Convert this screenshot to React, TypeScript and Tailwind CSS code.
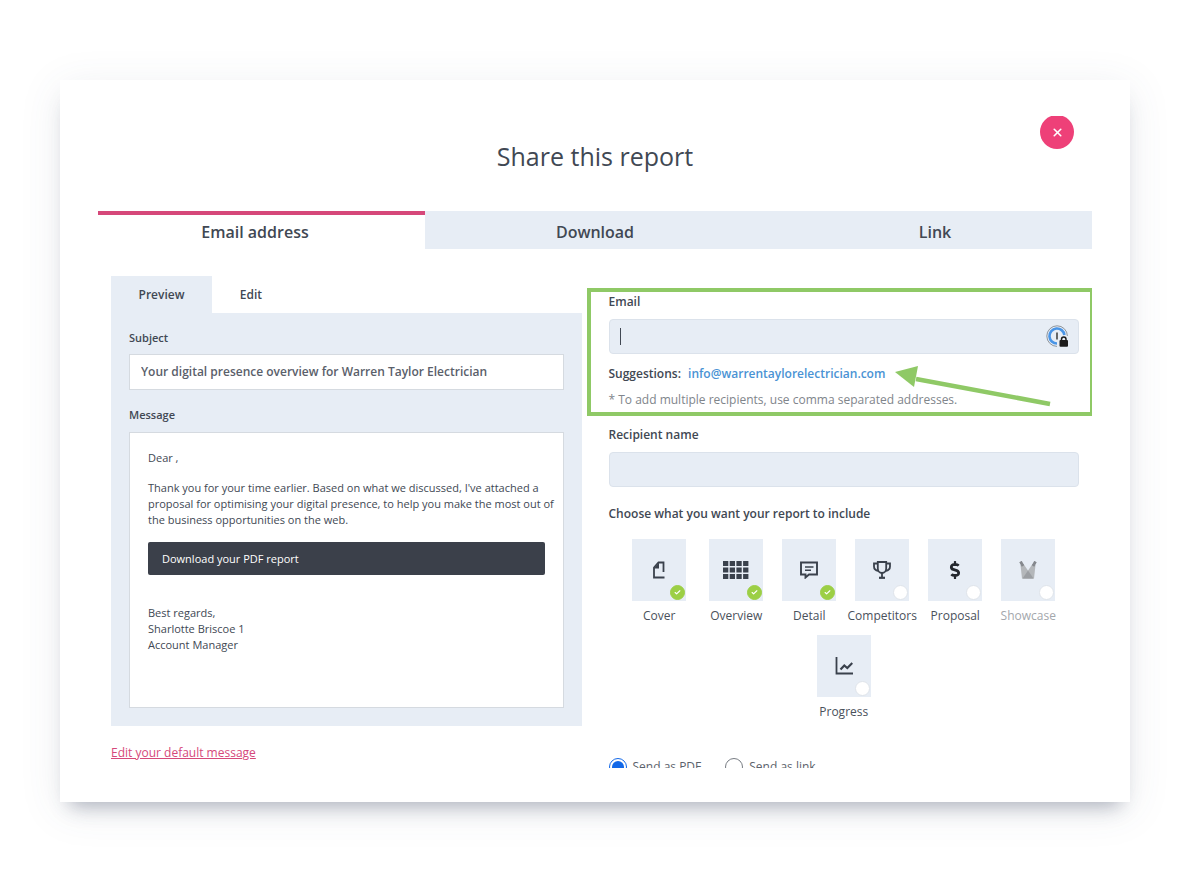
import { useState } from 'react'
import type { ReactNode } from 'react'
import { Check, X } from 'lucide-react'
import { FaDollarSign } from 'react-icons/fa'

function CoverIcon() {
  return (
    <svg width="18" height="18" viewBox="0 0 18 18" fill="none" stroke="#3a414c" strokeWidth="1.800">
      <path d="M14.500 16.500H4V6.500L8.500 1.500h5v9.500" />
      <path d="M4 7.500h5V1.500z" fill="#3a414c" stroke="none" />
    </svg>
  )
}

function OverviewIcon() {
  return (
    <svg width="26" height="18" viewBox="0 0 26 18" fill="#3a414c">
      {[0, 6.500, 13].map((y) => [0, 6.700, 13.400, 20.100].map((x) => (
        <rect key={`${x}-${y}`} x={x} y={y} width="5.300" height="5" />
      )))}
    </svg>
  )
}

function DetailIcon() {
  return (
    <svg width="18" height="18" viewBox="0 0 18 18" fill="none" stroke="#3a414c" strokeWidth="1.900">
      <path d="M1 1.500h16v12H9L5.500 16.500v-3H1z" />
      <path d="M5 6h8.500M5 9.200h6" strokeWidth="1.600" />
    </svg>
  )
}

function TrophyIcon() {
  return (
    <svg width="18" height="18" viewBox="0 0 18 18" fill="none" stroke="#3a414c" strokeWidth="1.800">
      <path d="M4.800 1h8.400v6.500c0 2.500-1.800 4.500-4.200 4.500s-4.200-2-4.200-4.500z" />
      <path d="M4.800 2.500H1V5.500c0 2.400 1.800 4 4.300 4.300M13.200 2.500H17V5.500c0 2.400-1.800 4-4.300 4.300" />
      <path d="M9 12v4.500" />
      <path d="M6 16.800h6" strokeWidth="2.200" />
    </svg>
  )
}

function ShowcaseIcon() {
  return (
    <svg width="18" height="18" viewBox="0 0 18 18">
      <path d="M1.500 4L4.500 3 14.500 17.500H3z" fill="#b4b7ba" />
      <path d="M16.500 4L13.500 3 3.500 17.500H15z" fill="#b4b7ba" />
      <path d="M9 9.500l5.500 8h-11z" fill="#9b9ea2" />
      <path d="M1.500 .5l2.500 4.500M16.500 .5L14 5" stroke="#85888d" strokeWidth="2.800" />
    </svg>
  )
}

function ProgressIcon() {
  return (
    <svg width="18" height="18" viewBox="0 0 18 18" fill="none" stroke="#3a414c" strokeWidth="1.800">
      <path d="M1.500 0v16.500H18" />
      <path d="M5.500 12.500l3.800-4 3 2.500 5-5" strokeWidth="2.200" />
    </svg>
  )
}

function PasswordIcon() {
  return (
    <svg className="absolute right-2.5 top-1.5" width="23" height="23" viewBox="0 0 23 23" fill="none">
      <path d="M11 21.400A10.300 10.300 0 1 1 21.400 11" stroke="#8d949c" strokeWidth="1" />
      <path d="M11 18.500A7.500 7.500 0 1 1 18.400 10" stroke="#4a95e6" strokeWidth="2.600" />
      <path d="M11 7.500v7" stroke="#444" strokeWidth="1.600" />
      <rect x="13.500" y="15" width="8.500" height="6.800" rx="1" fill="#1c1c1c" />
      <path d="M15.500 15.500v-1.300a2.250 2.250 0 0 1 4.500 0v1.300" stroke="#1c1c1c" strokeWidth="1.500" />
    </svg>
  )
}

const sections: { id: string; icon: ReactNode; on?: boolean; disabled?: boolean }[] = [
  { id: 'Cover', icon: <CoverIcon />, on: true },
  { id: 'Overview', icon: <OverviewIcon />, on: true },
  { id: 'Detail', icon: <DetailIcon />, on: true },
  { id: 'Competitors', icon: <TrophyIcon /> },
  { id: 'Proposal', icon: <FaDollarSign size={18} className="text-[#24282e]" /> },
  { id: 'Showcase', icon: <ShowcaseIcon />, disabled: true },
  { id: 'Progress', icon: <ProgressIcon /> },
]

function SectionTile({ id, icon, on, disabled }: { id: string; icon: ReactNode; on?: boolean; disabled?: boolean }) {
  return (
    <label className={`flex w-[65px] flex-col items-center first:mr-1 ${disabled ? 'text-[#a3a7ac]' : 'text-[#4a515b]'}`}>
      <span className="relative flex h-[62px] w-[54px] items-center justify-center bg-[#e7edf5] text-[#3a414c]">
        {icon}
        <input
          type="checkbox"
          defaultChecked={on}
          disabled={disabled}
          className="peer absolute bottom-px right-px size-[15px] appearance-none rounded-full border border-[#dfe4ea] bg-white checked:border-[#9ccf45] checked:bg-[#9ccf45]"
        />
        <Check size={7} strokeWidth={4} className="pointer-events-none absolute bottom-[5px] right-[5px] hidden text-white peer-checked:block" />
      </span>
      <span className="mt-1.5 text-[12px] leading-[18px]">{id}</span>
    </label>
  )
}

export default function App() {
  const [subject, setSubject] = useState('Your digital presence overview for Warren Taylor Electrician')

  return (
    <main className="min-h-screen bg-white pt-20 pr-[62px] pb-[78px] pl-[60px] font-['Open_Sans',sans-serif] text-[#414853]">
      <div className="bg-white px-[38px] pt-9 pb-[34px] shadow-[0_14px_18px_-10px_rgba(70,80,105,0.4),0_8px_40px_rgba(70,80,105,0.1)]">
        <div className="max-h-[calc(100vh-228px)] overflow-hidden">
          <header className="relative pt-5">
            <h1 className="text-center text-[25px] leading-10">Share this report</h1>
            <button aria-label="Close" className="absolute -top-px right-[18px] flex size-[34px] items-center justify-center rounded-full bg-[#ee4078] text-white">
              <X size={13} strokeWidth={3} />
            </button>
          </header>

          <nav className="-mx-[13px] mt-[35px] grid grid-cols-3 text-[16px] font-semibold">
            <button className="h-[38px] border-t-4 border-[#d6487a]">Email address</button>
            <button className="h-[38px] bg-[#e7edf5] pt-1">Download</button>
            <button className="h-[38px] bg-[#e7edf5] pt-1">Link</button>
          </nav>

          <div className="grid grid-cols-2 gap-[27px] px-[13px] pt-[27px]">
            <section>
              <div className="flex text-[12px] font-semibold">
                <button className="h-[37px] w-[101px] bg-[#e7edf5]">Preview</button>
                <button className="h-[37px] w-[78px]">Edit</button>
              </div>
              <div className="bg-[#e7edf5] px-[18px] pt-4 pb-[18px]">
                <label htmlFor="subject" className="block text-[11px] font-semibold leading-[18px]">Subject</label>
                <input
                  id="subject"
                  value={subject}
                  onChange={(e) => setSubject(e.target.value)}
                  className="mt-[7px] block h-9 w-full border border-[#d5dae0] bg-white px-[11px] pb-0.5 text-[12px] font-semibold text-[#5a606a] outline-none"
                />
                <h2 className="mt-4 text-[11px] font-semibold leading-[18px]">Message</h2>
                <div className="mt-2 min-h-[276px] border border-[#d5dae0] bg-white px-[18px] pt-[17px] pb-[54px] text-[11px] font-medium leading-4">
                  <p>Dear ,</p>
                  <p className="-mr-4 mt-[14px]">
                    Thank you for your time earlier. Based on what we discussed, I've attached a proposal for optimising your digital presence, to help you make the most out of the business opportunities on the web.
                  </p>
                  <button className="mt-[14px] block h-[33px] w-full rounded-[2px] bg-[#3b404a] px-[14px] text-left text-white">Download your PDF report</button>
                  <p className="mt-[30px]">Best regards,<br />Sharlotte Briscoe 1<br />Account Manager</p>
                </div>
              </div>
              <a href="#default-message" className="mt-[18px] inline-block text-[12px] leading-[18px] text-[#d6487a] underline">Edit your default message</a>
            </section>

            <section className="pt-[17px]">
              <div className="relative">
                <div className="pointer-events-none absolute -top-[5px] -right-[13px] -left-[22px] h-32 border-4 border-r-2 border-[#8fc966]" />
                <label htmlFor="email" className="block text-[12px] font-semibold leading-[18px]">Email</label>
                <div className="relative mt-2">
                  <input id="email" type="email" className="block h-[35px] w-full rounded-[4px] border border-[#dbe2eb] bg-[#e7edf5] px-3 outline-none" />
                  <span className="pointer-events-none absolute top-[9px] left-[11px] h-[17px] w-px bg-[#414853]" />
                  <PasswordIcon />
                </div>
                <p className="mt-2.5 text-[12px] font-semibold leading-5">
                  Suggestions: <a href="mailto:info@warrentaylorelectrician.com" className="ml-1 text-[#4a93d4]">info@warrentaylorelectrician.com</a>
                </p>
                <p className="mt-1.5 text-[12px] leading-5 text-[#80858b]">* To add multiple recipients, use comma separated addresses.</p>
                <svg className="pointer-events-none absolute top-[70px] right-[28px]" width="157" height="46" viewBox="0 0 157 46">
                  <path d="M22 16L156 41" stroke="#8fc966" strokeWidth="4.500" />
                  <path d="M1 9L24 3L20 24z" fill="#8fc966" />
                </svg>
              </div>

              <label htmlFor="recipient" className="mt-4 block text-[12px] font-semibold leading-[18px]">Recipient name</label>
              <input id="recipient" className="mt-2 block h-[35px] w-full rounded-[4px] border border-[#dbe2eb] bg-[#e7edf5] px-3 outline-none" />

              <fieldset className="mt-[18px]">
                <legend className="text-[12px] font-semibold leading-[18px]">Choose what you want your report to include</legend>
                <div className="mt-4 flex flex-wrap justify-center gap-x-2 gap-y-2.5">
                  {sections.map((s) => <SectionTile key={s.id} {...s} />)}
                </div>
              </fieldset>

              <div className="mt-9 flex gap-6 text-[12px] leading-5 text-[#5b626b]">
                <label className="flex items-center gap-1.5">
                  <input type="radio" name="format" defaultChecked className="size-[18px] appearance-none rounded-full border border-[#1268e8] bg-white p-[2px] checked:bg-[#1268e8] checked:bg-clip-content" />
                  Send as PDF
                </label>
                <label className="flex items-center gap-1.5">
                  <input type="radio" name="format" className="size-[18px] appearance-none rounded-full border border-[#777c83] bg-white" />
                  Send as link
                </label>
              </div>
            </section>
          </div>
        </div>
      </div>
    </main>
  )
}
